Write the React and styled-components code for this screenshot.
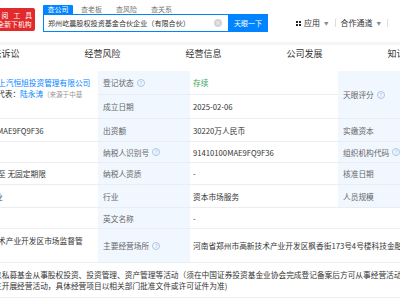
import styled, { createGlobalStyle } from "styled-components";

const GlobalStyle = createGlobalStyle`
  html, body {
    margin: 0;
    padding: 0;
    background: #ffffff;
    overflow: hidden;
  }
  body {
    font-family: "Noto Sans CJK SC", "Noto Sans", sans-serif;
    color: #333;
  }
`;

const Page = styled.div`
  width: 400px;
  height: 300px;
  overflow: hidden;
  background: #fff;
`;

const Header = styled.header`
  height: 42px;
  display: flex;
  align-items: flex-start;
  box-sizing: border-box;
`;

const Logo = styled.div`
  margin-top: 8px;
  margin-left: -6px;
  width: 41px;
  height: 23px;
  background: #e2292c;
  border-radius: 2px;
  color: #fff;
  font-size: 6.8px;
  line-height: 9px;
  padding-top: 2.5px;
  box-sizing: border-box;
  overflow: hidden;
  white-space: nowrap;
`;

const LogoLine = styled.div`
  display: flex;
  justify-content: ${(p) => (p.$spread ? "flex-end" : "center")};
  gap: ${(p) => (p.$spread ? "5px" : "0")};
  padding-right: ${(p) => (p.$spread ? "3px" : "0")};
`;

const Search = styled.div`
  margin-left: 8px;
  margin-top: 5px;
  display: flex;
  flex-direction: column;
`;

const Tabs = styled.div`
  display: flex;
  height: 9px;
`;

const Tab = styled.div`
  width: ${(p) => (p.$active ? "30px" : "33px")};
  margin-left: ${(p) => (p.$active ? "0" : "2px")};
  height: 9px;
  font-size: 7px;
  line-height: 9px;
  text-align: center;
  color: ${(p) => (p.$active ? "#fff" : "#777")};
  background: ${(p) => (p.$active ? "#0084ff" : "transparent")};
  border-radius: 1px 1px 0 0;
`;

const SearchRow = styled.div`
  display: flex;
  height: 18px;
`;

const Input = styled.div`
  width: 185px;
  height: 18px;
  box-sizing: border-box;
  border: 1px solid #0084ff;
  border-right: none;
  display: flex;
  align-items: center;
  padding-left: 4px;
  padding-right: 6px;
  font-size: 7.1px;
  color: #333;
  white-space: nowrap;
`;

const InputText = styled.span`
  flex: 1;
`;

const Clear = styled.span`
  width: 8px;
  height: 8px;
  border-radius: 50%;
  background: #d3d3d3;
  color: #fff;
  font-size: 6px;
  line-height: 8px;
  text-align: center;
`;

const SearchButton = styled.div`
  width: 40px;
  height: 18px;
  background: #0084ff;
  color: #fff;
  font-size: 7px;
  line-height: 18px;
  text-align: center;
`;

const Menu = styled.div`
  margin-left: auto;
  margin-right: 7px;
  margin-top: 17px;
  display: flex;
  align-items: center;
  font-size: 8px;
  color: #333;
  line-height: 12px;
`;

const MenuItem = styled.div`
  display: flex;
  align-items: center;
  gap: 2px;
`;

const Caret = styled.span`
  font-size: 4.5px;
  color: #888;
  margin-left: 2px;
`;

const Divider = styled.span`
  width: 1px;
  height: 8px;
  background: #ddd;
  margin: 0 5px 0 6px;
`;

const GridIcon = styled.span`
  display: grid;
  grid-template-columns: 2px 2px;
  gap: 1px;
  margin-right: 1px;
  span {
    width: 2px;
    height: 2px;
    background: #222;
  }
`;

const Nav = styled.nav`
  height: 29px;
  box-sizing: border-box;
  border-top: 3px solid #f4f5f7;
  overflow: hidden;
  display: flex;
`;

const NavTrack = styled.div`
  display: flex;
  margin-left: -49px;
  padding-top: 3px;
`;

const NavItem = styled.div`
  width: 101px;
  flex-shrink: 0;
  text-align: center;
  font-size: 9px;
  line-height: 12px;
  color: #333;
`;

const Table = styled.div`
  display: grid;
  grid-template-columns: 98px 92px 148px 62px;
  grid-template-rows: 24px 24px 23px 21px 22px 23px 21px 34px 35px;
  font-size: 7.7px;
`;

const Cell = styled.div`
  box-sizing: border-box;
  border-bottom: 1px solid #ebedf0;
  grid-row: ${(p) => (p.$rows ? `span ${p.$rows}` : "auto")};
  grid-column: ${(p) => (p.$cols ? `span ${p.$cols}` : "auto")};
  overflow: hidden;
  white-space: nowrap;
  display: flex;
  flex-direction: column;
  justify-content: ${(p) => (p.$top ? "flex-start" : "center")};
  padding-top: ${(p) => (p.$top ? "6px" : "0")};
  line-height: 11px;
  color: #333;
`;

const Label = styled(Cell)`
  background: #f0f7ff;
  color: #666;
  padding-left: 5px;
  flex-direction: row;
  align-items: center;
  justify-content: flex-start;
`;

const Value = styled(Cell)`
  padding-left: 3px;
  color: ${(p) => p.$color || "#333"};
`;

const Cut = styled.span`
  display: block;
  margin-left: ${(p) => p.$shift || 0}px;
`;

const Link = styled.span`
  color: #0084ff;
`;

const Note = styled.span`
  color: #999;
  font-size: 6.6px;
  margin-left: 4px;
`;

const Help = styled.span`
  width: 6px;
  height: 6px;
  border: 1px solid #aec4e0;
  border-radius: 50%;
  color: #9fb6d6;
  font-size: 5px;
  line-height: 6px;
  text-align: center;
  margin-left: 3px;
  flex-shrink: 0;
`;

function App() {
  return (
    <Page>
      <GlobalStyle />
      <Header>
        <Logo>
          <LogoLine $spread>
            <span>查</span>
            <span>阅</span>
            <span>工</span>
            <span>具</span>
          </LogoLine>
          <LogoLine>全新下机构</LogoLine>
        </Logo>
        <Search>
          <Tabs>
            <Tab $active>查公司</Tab>
            <Tab>查老板</Tab>
            <Tab>查风险</Tab>
            <Tab>查关系</Tab>
          </Tabs>
          <SearchRow>
            <Input>
              <InputText>郑州屹晨股权投资基金合伙企业（有限合伙）</InputText>
              <Clear>×</Clear>
            </Input>
            <SearchButton>天眼一下</SearchButton>
          </SearchRow>
        </Search>
        <Menu>
          <MenuItem>
            <GridIcon>
              <span />
              <span />
              <span />
              <span />
            </GridIcon>
            应用<Caret>▼</Caret>
          </MenuItem>
          <Divider />
          <MenuItem>
            合作通道<Caret>▼</Caret>
          </MenuItem>
          <Divider />
        </Menu>
      </Header>

      <Nav>
        <NavTrack>
          <NavItem>司法诉讼</NavItem>
          <NavItem>经营风险</NavItem>
          <NavItem>经营信息</NavItem>
          <NavItem>公司发展</NavItem>
          <NavItem>知识产权</NavItem>
        </NavTrack>
      </Nav>

      <Table>
        <Cell $rows={2} $top>
          <Cut $shift={-2}>
            <Link>上汽恒旭投资管理有限公司</Link>
          </Cut>
          <Cut $shift={-3}>
            代表：<Link>陆永涛</Link>
            <Note>(来源于中基</Note>
          </Cut>
        </Cell>
        <Label>
          登记状态<Help>?</Help>
        </Label>
        <Value $color="#3aa55a">存续</Value>
        <Label $rows={2}>
          天眼评分<Help>?</Help>
        </Label>

        <Label>成立日期</Label>
        <Value>2025-02-06</Value>

        <Cell>
          <Cut $shift={-3}>MAE9FQ9F36</Cut>
        </Cell>
        <Label>出资额</Label>
        <Value>30220万人民币</Value>
        <Label>实缴资本</Label>

        <Cell />
        <Label>
          纳税人识别号<Help>?</Help>
        </Label>
        <Value>91410100MAE9FQ9F36</Value>
        <Label>
          组织机构代码<Help>?</Help>
        </Label>

        <Cell>
          <Cut $shift={-2}>至 无固定期限</Cut>
        </Cell>
        <Label>纳税人资质</Label>
        <Value>-</Value>
        <Label>核准日期</Label>

        <Cell>
          <Cut $shift={-5}>业</Cut>
        </Cell>
        <Label>行业</Label>
        <Value>资本市场服务</Value>
        <Label>人员规模</Label>

        <Cell />
        <Label>英文名称</Label>
        <Value $cols={2}>-</Value>

        <Cell $top>
          <Cut $shift={-2}>术产业开发区市场监督管</Cut>
        </Cell>
        <Label>
          主要经营场所<Help>?</Help>
        </Label>
        <Value $cols={2}>河南省郑州市高新技术产业开发区枫香街173号4号楼科技金融广场</Value>

        <Cell $cols={4} $top>
          <Cut $shift={-6}>
            以私募基金从事股权投资、投资管理、资产管理等活动（须在中国证券投资基金业协会完成登记备案后方可从事经营活动）
          </Cut>
          <Cut $shift={-6}>
            主开展经营活动，具体经营项目以相关部门批准文件或许可证件为准)
          </Cut>
        </Cell>
      </Table>
    </Page>
  );
}

export default App;
